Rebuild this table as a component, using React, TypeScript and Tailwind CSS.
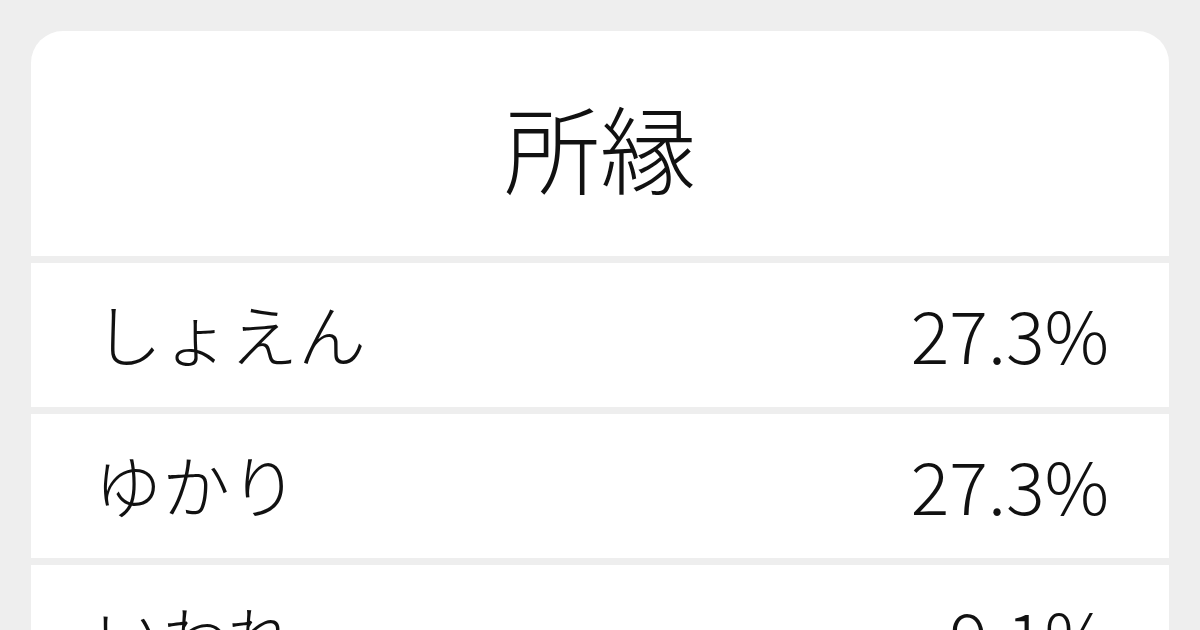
const rows = [
  { reading: 'しょえん', pct: '27.3%' },
  { reading: 'ゆかり', pct: '27.3%' },
  { reading: 'いわれ', pct: '9.1%' },
]

export default function App() {
  return (
    <div
      className="w-[1200px] h-[630px] overflow-hidden bg-[#eeeeee] pt-[31px] px-[31px] text-[#111111]"
      style={{ fontFamily: '"Noto Sans CJK JP", "Noto Sans", sans-serif' }}
    >
      <div className="flex flex-col gap-[7px] rounded-t-[32px] overflow-hidden">
        {/* Title */}
        <div className="h-[225px] bg-white flex items-center justify-center">
          <h1 className="text-[96px] font-light leading-none pt-[4px]">所縁</h1>
        </div>

        {/* Readings */}
        {rows.map((r, i) => (
          <div key={i} className="h-[144px] bg-white flex items-center justify-between pl-[63px] pr-[60px] pb-[4px] shrink-0">
            <span className="text-[68px] font-light leading-none">{r.reading}</span>
            <span className="text-[72px] font-light leading-none">{r.pct}</span>
          </div>
        ))}
      </div>
    </div>
  )
}
